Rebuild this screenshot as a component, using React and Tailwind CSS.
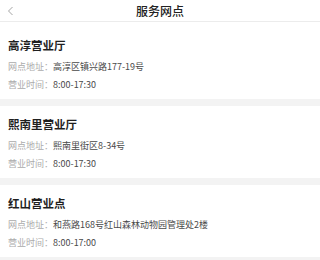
const outlets = [
  { name: "高淳营业厅", address: "高淳区镇兴路177-19号", hours: "8:00-17:30" },
  { name: "熙南里营业厅", address: "熙南里街区8-34号", hours: "8:00-17:30" },
  { name: "红山营业点", address: "和燕路168号红山森林动物园管理处2楼", hours: "8:00-17:00" },
];

const Outlet = ({ outlet, first }) => (
  <div className={`bg-white px-[8px] pb-[7px] ${first ? "pt-[16px]" : "pt-[11px]"}`}>
    <div className="text-[11.5px] font-bold leading-[14px] text-[#1f1f1f]">{outlet.name}</div>
    <div className="mt-[8px] text-[9px] leading-[14px]">
      <span className="text-[#ababab]">网点地址：</span>
      <span className="text-[#4a4a4a]">{outlet.address}</span>
    </div>
    <div className="mt-[4px] text-[9px] leading-[14px]">
      <span className="text-[#ababab]">营业时间：</span>
      <span className="text-[#4a4a4a]">{outlet.hours}</span>
    </div>
  </div>
);

export default function App() {
  return (
    <div
      className="w-[320px] h-[260px] overflow-hidden bg-[#f3f3f3]"
      style={{ fontFamily: '"Noto Sans CJK SC", "Noto Sans", sans-serif' }}
    >
      <div className="relative flex h-[22px] items-center justify-center border-b border-[#ececec] bg-white">
        <svg className="absolute left-[7px] top-[6px]" width="7" height="10" viewBox="0 0 7 10">
          <polyline points="5.5,1 1.5,5 5.5,9" fill="none" stroke="#9a9a9a" strokeWidth="0.9" />
        </svg>
        <span className="text-[12px] font-medium leading-none text-[#222]">服务网点</span>
      </div>
      <div className="flex flex-col gap-[7px]">
        {outlets.map((o, i) => (
          <Outlet key={o.name} outlet={o} first={i === 0} />
        ))}
      </div>
    </div>
  );
}
